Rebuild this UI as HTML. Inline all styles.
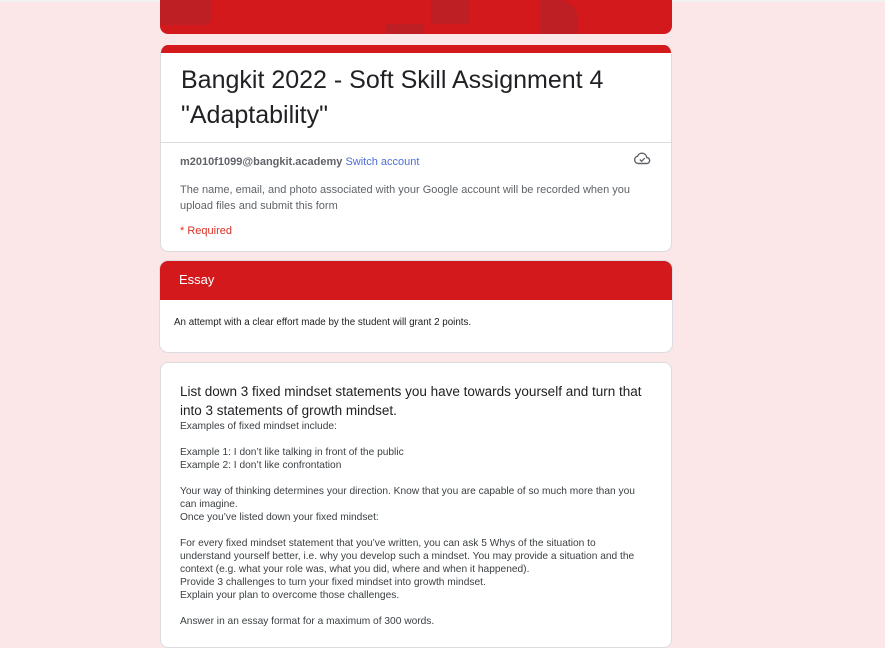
<!DOCTYPE html>
<html><head><meta charset="utf-8"><style>
*{margin:0;padding:0;box-sizing:border-box}
body{width:885px;height:647px;overflow:hidden;background:#fbe7e8;font-family:"Liberation Sans",sans-serif;position:relative}
.topline{position:absolute;left:0;top:0;width:885px;height:2px;background:#f1f1f1}
.card{position:absolute;left:160px;width:512px;background:#fff;border:1px solid #dadce0;border-radius:8px;overflow:hidden}
.banner{position:absolute;left:160px;top:0;width:512px;height:34px;background:#d3191c;border-radius:0 0 8px 8px;overflow:hidden}
.banner div{position:absolute;background:#bd1f24}
</style></head><body>
<div class="topline"></div>
<div class="banner">
<div style="left:0;top:0;width:52px;height:25px;border-radius:0 0 8px 0"></div>
<div style="left:226px;top:24px;width:38px;height:10px"></div>
<div style="left:271px;top:0;width:38px;height:24px"></div>
<div style="left:380px;top:0;width:38px;height:34px;border-radius:0 20px 0 0"></div>
</div>
<div class="card" style="top:45px;height:207px;border-top:none">
<div style="height:8px;background:#d3191c"></div>
<div style="padding:10px 20px 0 20px;font-size:25px;line-height:35px;color:#202124;height:89px">Bangkit 2022 - Soft Skill Assignment 4 "Adaptability"</div>
<div style="border-top:1px solid #dadce0"></div>
<div style="padding:12px 20px 0 19px;font-size:11px;color:#5f6368">
<div style="line-height:14px"><b>m2010f1099@bangkit.academy</b> <span style="color:#4e6fd8">Switch account</span>
<svg style="position:absolute;right:20px;top:106px" width="18" height="14" viewBox="0 0 18 14"><path d="M5 12.5h8.5a3 3 0 0 0 .3-6 4.8 4.8 0 0 0-9.2-1.3A3.7 3.7 0 0 0 5 12.5z" fill="none" stroke="#5f6368" stroke-width="1.4"/><path d="M6.8 8.5l1.8 1.8 3.2-3.2" fill="none" stroke="#5f6368" stroke-width="1.3"/></svg></div>
<div style="margin-top:13px;line-height:16px">The name, email, and photo associated with your Google account will be recorded when you upload files and submit this form</div>
<div style="margin-top:11px;color:#d93025">* Required</div>
</div>
</div>
<div class="card" style="top:261px;height:91px;border:none;box-shadow:0 0 0 1px #dadce0">
<div style="height:39px;background:#d3191c;color:#fff;font-size:13px;padding:11px 0 0 19px">Essay</div>
<div style="padding:17px 0 0 14px;font-size:9.8px;color:#202124">An attempt with a clear effort made by the student will grant 2 points.</div>
</div>
<div class="card" style="top:362px;height:286px">
<div style="padding:19px 0 0 19px;color:#202124;white-space:nowrap">
<div style="font-size:13.5px;line-height:19px">List down 3 fixed mindset statements you have towards yourself and turn that<br>into 3 statements of growth mindset.</div>
<div style="font-size:10.2px;line-height:13px;color:#3c4043">Examples of fixed mindset include:<br><br>Example 1: I don’t like talking in front of the public<br>Example 2: I don’t like confrontation<br><br>Your way of thinking determines your direction. Know that you are capable of so much more than you<br>can imagine.<br>Once you’ve listed down your fixed mindset:<br><br>For every fixed mindset statement that you’ve written, you can ask 5 Whys of the situation to<br>understand yourself better, i.e. why you develop such a mindset. You may provide a situation and the<br>context (e.g. what your role was, what you did, where and when it happened).<br>Provide 3 challenges to turn your fixed mindset into growth mindset.<br>Explain your plan to overcome those challenges.<br><br>Answer in an essay format for a maximum of 300 words.</div>
</div>
</div>
</body></html>
